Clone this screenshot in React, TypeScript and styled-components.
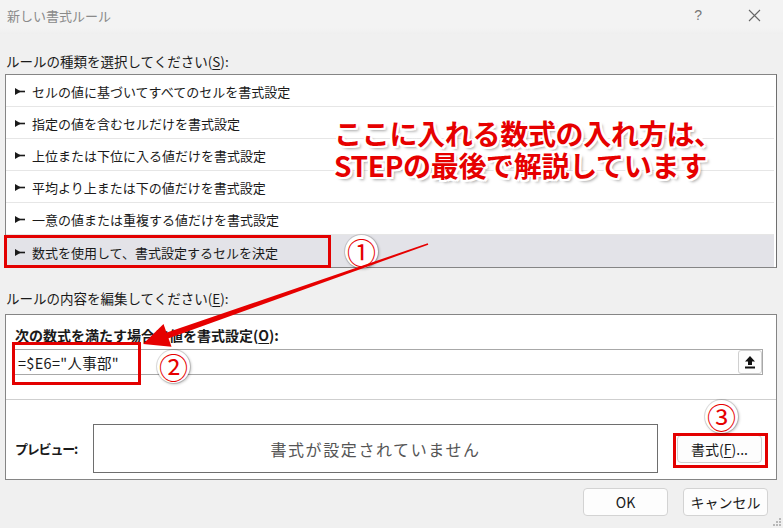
import React from 'react';
import styled, { createGlobalStyle } from 'styled-components';

const GlobalStyle = createGlobalStyle`
  html, body { margin: 0; padding: 0; background: #f0f0f0; }
  body { font-family: "Noto Sans CJK JP", "Noto Sans", sans-serif; color: #1a1a1a; }
`;

const rules = [
  'セルの値に基づいてすべてのセルを書式設定',
  '指定の値を含むセルだけを書式設定',
  '上位または下位に入る値だけを書式設定',
  '平均より上または下の値だけを書式設定',
  '一意の値または重複する値だけを書式設定',
  '数式を使用して、書式設定するセルを決定',
];

function Marker() {
  return (
    <svg width="10" height="7" viewBox="0 0 10 7">
      <polygon points="0,0 0,7 6,3.5" fill="#1a1a1a" />
      <rect x="4" y="2.7" width="6" height="1.6" fill="#1a1a1a" />
    </svg>
  );
}

function RefIcon() {
  return (
    <svg width="12" height="14" viewBox="0 0 12 14">
      <polygon points="6,1 11,6.5 8,6.5 8,10 4,10 4,6.5 1,6.5" fill="#111" />
      <rect x="1" y="11.5" width="10" height="2" fill="#111" />
    </svg>
  );
}

function App() {
  return (
    <>
      <GlobalStyle />
      <Window>
        <TitleBar>
          <Title>新しい書式ルール</Title>
          <TitleControls>
            <HelpGlyph>?</HelpGlyph>
            <svg width="13" height="13" viewBox="0 0 13 13">
              <path d="M1 1 L12 12 M12 1 L1 12" stroke="#666" strokeWidth="1.1" />
            </svg>
          </TitleControls>
        </TitleBar>

        <Body>
          <SectionLabel $top={17} $bottom={3}>
            ルールの種類を選択してください(<u>S</u>):
          </SectionLabel>
          <RuleList>
            {rules.map((r, i) => (
              <RuleRow key={r} $selected={i === rules.length - 1} $last={i === rules.length - 1}>
                <Marker />
                <span>{r}</span>
              </RuleRow>
            ))}
          </RuleList>

          <SectionLabel $top={20} $bottom={6}>
            ルールの内容を編集してください(<u>E</u>):
          </SectionLabel>
          <EditPanel>
            <FormulaSection>
              <PanelLabel>次の数式を満たす場合に値を書式設定(<u>O</u>):</PanelLabel>
              <FormulaInput>
                <FormulaText>=$E6="人事部"</FormulaText>
                <RefButton>
                  <RefIcon />
                </RefButton>
              </FormulaInput>
            </FormulaSection>
            <PreviewSection>
              <PreviewLabel>プレビュー:</PreviewLabel>
              <PreviewBox>書式が設定されていません</PreviewBox>
              <FormatButton>
                書式(<u>F</u>)...
              </FormatButton>
            </PreviewSection>
          </EditPanel>

          <Footer>
            <DialogButton>OK</DialogButton>
            <DialogButton>キャンセル</DialogButton>
          </Footer>
        </Body>

        <Grip>
          <svg width="9" height="9" viewBox="0 0 9 9">
            {[[6, 0], [3, 3], [6, 3], [0, 6], [3, 6], [6, 6]].map(([x, y]) => (
              <rect key={`${x}-${y}`} x={x} y={y} width="2" height="2" fill="#b8b8b8" />
            ))}
          </svg>
        </Grip>

        {/* annotations laid over the dialog */}
        <Note>
          <NoteLine>ここに入れる数式の入れ方は、</NoteLine>
          <NoteLine>STEPの最後で解説しています</NoteLine>
        </Note>
        <Highlight style={{ left: 4, top: 235, width: 327, height: 33 }} />
        <Highlight style={{ left: 12, top: 342, width: 129, height: 43 }} />
        <Highlight style={{ left: 673, top: 433, width: 95, height: 35 }} />
        <Badge style={{ left: 345, top: 235 }}>①</Badge>
        <Badge style={{ left: 157, top: 350 }}>②</Badge>
        <Badge style={{ left: 705, top: 400 }}>③</Badge>
        <ArrowLayer width="783" height="528" viewBox="0 0 783 528">
          <polygon
            points="427.75,243.29 428.25,244.71 166.7,338.9 164.7,333.3"
            fill="#e60000"
          />
          <polygon points="143,344 163.5,324.1 171.5,346.7" fill="#e60000" />
        </ArrowLayer>
      </Window>
    </>
  );
}

export default App;

const Window = styled.div`
  position: relative;
  width: 783px;
  height: 528px;
  overflow: hidden;
  background: #f0f0f0;
  display: flex;
  flex-direction: column;
`;

const TitleBar = styled.div`
  height: 34px;
  flex: none;
  display: flex;
  align-items: center;
  justify-content: space-between;
  padding: 0 22px 4px 7px;
  box-sizing: border-box;
  background: linear-gradient(#f3f3f3 0, #f3f3f3 28px, #efefef 34px);
`;

const Title = styled.div`
  font-size: 13px;
  color: #8a8a8a;
`;

const TitleControls = styled.div`
  display: flex;
  align-items: center;
  gap: 46px;
`;

const HelpGlyph = styled.span`
  font-family: "Liberation Sans", sans-serif;
  font-size: 14px;
  color: #777;
`;

const Body = styled.div`
  display: flex;
  flex-direction: column;
  padding: 0 6px 0 5px;
`;

const SectionLabel = styled.div<{ $top: number; $bottom: number }>`
  margin-top: ${(p) => p.$top}px;
  margin-bottom: ${(p) => p.$bottom}px;
  font-size: 13.5px;
  line-height: 20px;
  padding-left: 1px;
  color: #1a1a1a;
  u { text-underline-offset: 2px; }
`;

const RuleList = styled.div`
  border: 1px solid #858585;
  border-right-color: #6f6f6f;
  background: #fff;
  display: flex;
  flex-direction: column;
`;

const RuleRow = styled.div<{ $selected: boolean; $last: boolean }>`
  height: 32px;
  box-sizing: border-box;
  display: flex;
  align-items: center;
  gap: 7px;
  padding: 2px 0 0 9px;
  font-size: 13px;
  background: ${(p) => (p.$selected ? '#e3e3e8' : '#fff')};
  border-bottom: ${(p) => (p.$last ? 'none' : '1px solid #e6e6e6')};
  margin: 0 2px 0 0;
`;

const EditPanel = styled.div`
  border: 1px solid #858585;
  background: #fff;
  display: flex;
  flex-direction: column;
`;

const FormulaSection = styled.div`
  display: flex;
  flex-direction: column;
  padding: 10px 13px 24px 7px;
`;

const PanelLabel = styled.div`
  font-size: 14px;
  font-weight: 700;
  line-height: 20px;
  padding-left: 2px;
  white-space: nowrap;
  u { text-underline-offset: 2px; }
`;

const PreviewLabel = styled.div`
  flex: none;
  width: 63px;
  font-size: 13px;
  font-weight: 700;
  letter-spacing: -1.2px;
  white-space: nowrap;
`;

const FormulaInput = styled.div`
  margin-top: 4px;
  height: 26px;
  box-sizing: border-box;
  border: 1px solid #a8a8a8;
  display: flex;
  align-items: center;
  justify-content: space-between;
`;

const FormulaText = styled.span`
  font-size: 14.5px;
  padding-left: 4px;
  letter-spacing: 0.3px;
`;

const RefButton = styled.div`
  width: 24px;
  height: 24px;
  box-sizing: border-box;
  border: 1px solid #d0d0d0;
  border-radius: 3px;
  background: #fdfdfd;
  display: flex;
  align-items: center;
  justify-content: center;
`;

const PreviewSection = styled.div`
  border-top: 1px solid #cfcfcf;
  display: flex;
  align-items: center;
  padding: 24px 0 6px 9px;
  gap: 15px;
`;

const PreviewBox = styled.div`
  flex: none;
  width: 565px;
  height: 49px;
  box-sizing: border-box;
  border: 1px solid #6e6e6e;
  display: flex;
  align-items: center;
  justify-content: center;
  font-size: 16px;
  letter-spacing: 1.6px;
  color: #555;
`;

const FormatButton = styled.div`
  flex: none;
  margin-left: 4px;
  width: 85px;
  height: 28px;
  box-sizing: border-box;
  border: 1px solid #d0d0d0;
  border-radius: 4px;
  background: #fdfdfd;
  display: flex;
  align-items: center;
  justify-content: center;
  font-size: 14px;
  white-space: nowrap;
  u { text-underline-offset: 2px; }
`;

const Footer = styled.div`
  display: flex;
  justify-content: flex-end;
  gap: 15px;
  margin-top: 8px;
  padding-right: 9px;
`;

const DialogButton = styled.div`
  width: 85px;
  height: 28px;
  box-sizing: border-box;
  border: 1px solid #d3d3d3;
  border-radius: 4px;
  background: #fdfdfd;
  display: flex;
  align-items: center;
  justify-content: center;
  font-size: 14px;
  font-family: "Noto Sans CJK JP", "Noto Sans", sans-serif;
`;

const Grip = styled.div`
  position: absolute;
  right: 1px;
  bottom: 1px;
  line-height: 0;
`;

const Note = styled.div`
  position: absolute;
  left: 334px;
  top: 117px;
  display: flex;
  flex-direction: column;
`;

const NoteLine = styled.div`
  height: 32px;
  font-size: 28px;
  font-weight: 700;
  line-height: 32px;
  color: #e60000;
  white-space: nowrap;
  letter-spacing: -0.3px;
  text-shadow:
    2px 0 0 #fff, -2px 0 0 #fff, 0 2px 0 #fff, 0 -2px 0 #fff,
    2px 2px 0 #fff, -2px -2px 0 #fff, 2px -2px 0 #fff, -2px 2px 0 #fff,
    3px 3px 3px rgba(0, 0, 0, 0.35);
`;

const Highlight = styled.div`
  position: absolute;
  box-sizing: border-box;
  border: 3px solid #e30000;
  pointer-events: none;
`;

const Badge = styled.div`
  position: absolute;
  width: 33px;
  height: 33px;
  border-radius: 50%;
  background: #fff;
  box-shadow: 0 0 0 1px rgba(0, 0, 0, 0.12), 1px 1px 3px rgba(0, 0, 0, 0.3);
  display: flex;
  align-items: center;
  justify-content: center;
  font-size: 29px;
  line-height: 1;
  color: #e60000;
`;

const ArrowLayer = styled.svg`
  position: absolute;
  left: 0;
  top: 0;
  pointer-events: none;
`;
